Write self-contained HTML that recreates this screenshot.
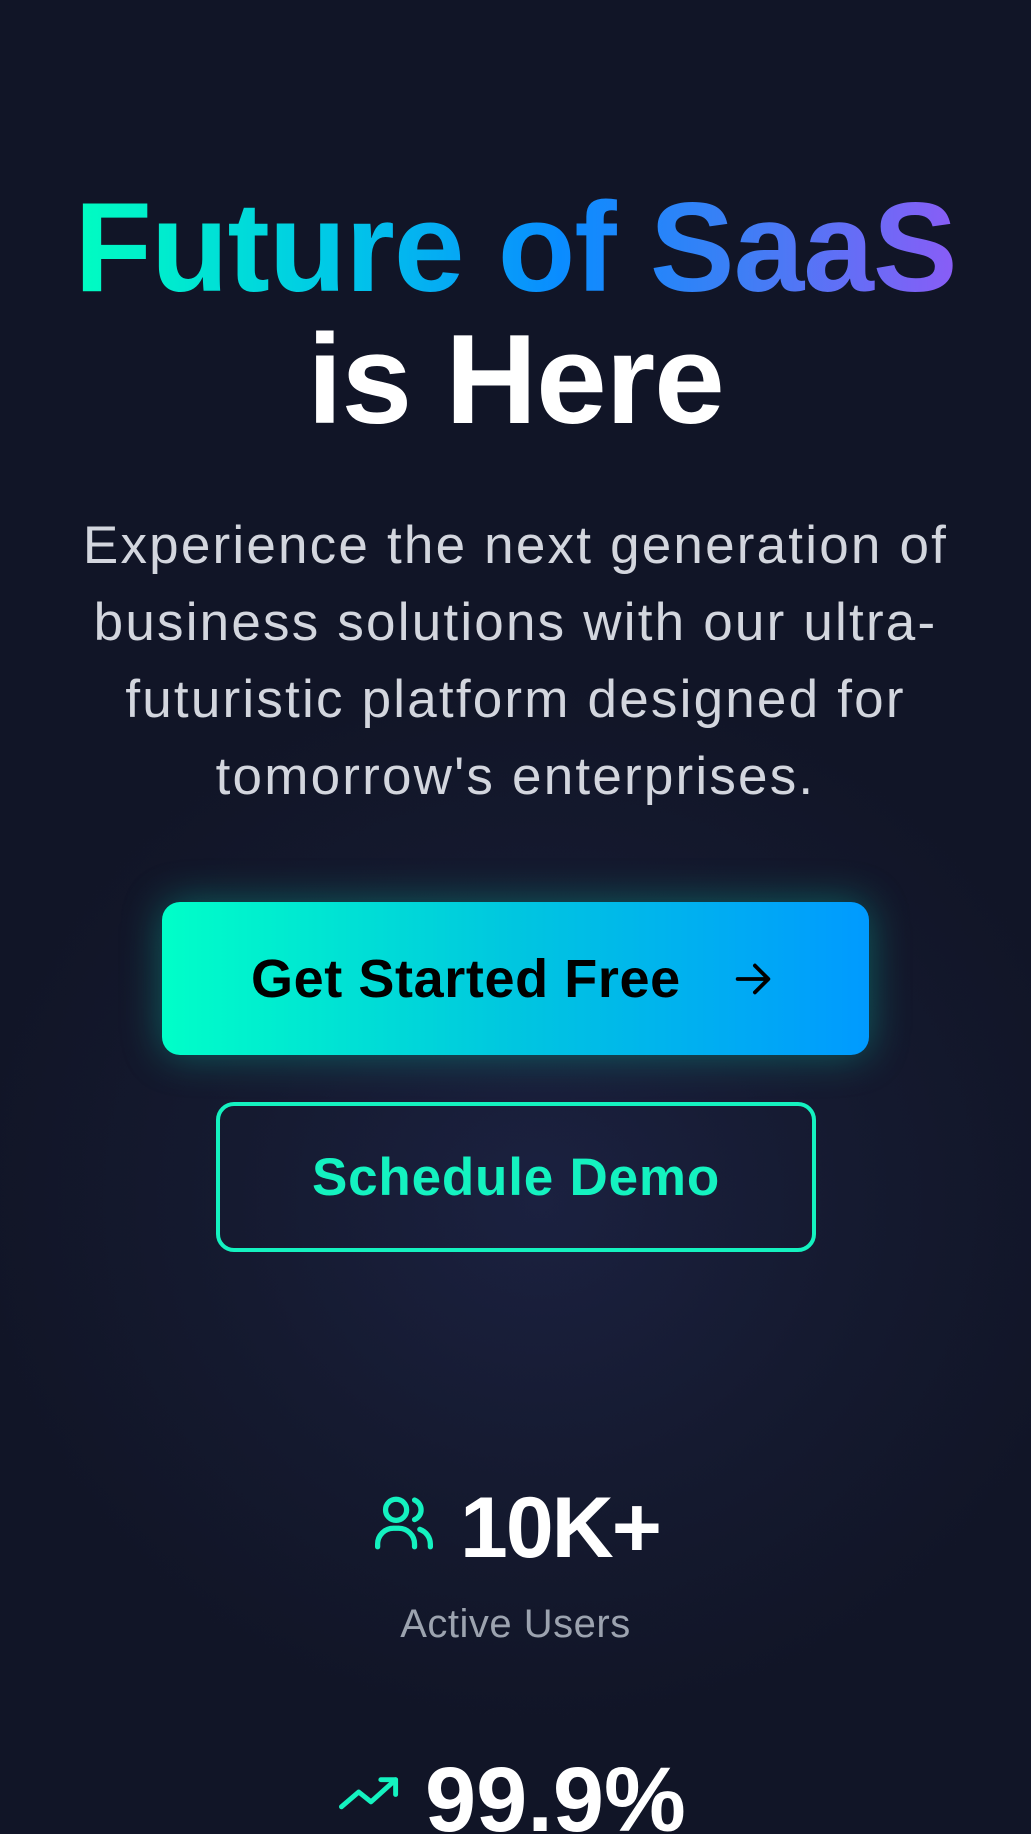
<!DOCTYPE html>
<html><head><meta charset="utf-8"><style>
*{margin:0;padding:0;box-sizing:border-box}
html,body{width:1031px;height:1834px;overflow:hidden}
body{background:radial-gradient(ellipse 560px 520px at 540px 1200px,#1b2140 0%,#151a30 55%,#111527 100%);font-family:"Liberation Sans",sans-serif;position:relative}
.c{position:absolute;left:0;width:1031px;text-align:center;white-space:nowrap}
.h1{top:181px;font-size:127px;font-weight:bold;line-height:132px;letter-spacing:-1px}
.h1 .g{background:linear-gradient(90deg,#00ffc0 0%,#00c8e8 30%,#0a8cff 55%,#3d7ff5 75%,#8b5cf6 100%);-webkit-background-clip:text;background-clip:text;color:transparent;padding:0 4px}
.h1 .w{color:#fff}
.p{top:507px;font-size:53px;line-height:77px;color:#d3d6de;letter-spacing:2.2px}
.b1{position:absolute;left:162px;top:902px;width:707px;height:153px;border-radius:18px;background:linear-gradient(90deg,#00ffc8,#00c6e0 50%,#009aff);box-shadow:0 0 40px rgba(0,230,190,0.35)}
.b1 span{position:absolute;left:89px;top:47px;font-size:54px;font-weight:bold;color:#000;line-height:60px;letter-spacing:0.6px}
.b2{position:absolute;left:216px;top:1102px;width:600px;height:150px;border:4px solid #14f2c0;border-radius:18px}
.b2 span{position:absolute;left:0;width:592px;text-align:center;top:42px;font-size:53px;font-weight:bold;color:#14f2c0;line-height:60px;letter-spacing:0.8px}
.n{font-weight:bold;color:#fff;position:absolute;line-height:1}
</style></head><body>
<div class="c h1"><span class="g">Future of SaaS</span><br><span class="w">is Here</span></div>
<div class="c p">Experience the next generation of<br>business solutions with our ultra-<br>futuristic platform designed for<br>tomorrow's enterprises.</div>
<div class="b1"><span>Get Started Free</span>
<svg style="position:absolute;left:568px;top:54px" width="46" height="46" viewBox="0 0 24 24" fill="none" stroke="#000" stroke-width="2" stroke-linecap="round" stroke-linejoin="round"><path d="M4 12h16M13 5l7 7-7 7"/></svg></div>
<div class="b2"><span>Schedule Demo</span></div>
<svg style="position:absolute;left:372px;top:1494px" width="64" height="58" viewBox="0 0 24 22" fill="none" stroke="#14f2c0" stroke-width="2" stroke-linecap="round" stroke-linejoin="round"><circle cx="9" cy="6" r="4"/><path d="M2 20v-1a6 6 0 0 1 6-6h2a6 6 0 0 1 6 6v1"/><path d="M16 2.3a4 4 0 0 1 0 7.4"/><path d="M22 20v-1a6 6 0 0 0-4-5.6"/></svg>
<div class="n" style="left:460px;top:1485px;font-size:86px;letter-spacing:-2px">10K+</div>
<div class="c" style="top:1602px;font-size:40px;color:#9ca3af;line-height:44px;letter-spacing:0.5px">Active Users</div>
<svg style="position:absolute;left:339px;top:1770px" width="64" height="44" viewBox="0 0 26 16" fill="none" stroke="#14f2c0" stroke-width="2" stroke-linecap="round" stroke-linejoin="round"><path d="M1 14l7-6 5 4 10-9"/><path d="M17 3h6v6"/></svg>
<div class="n" style="left:425px;top:1754px;font-size:92px;letter-spacing:0px">99.9%</div>
</body></html>
